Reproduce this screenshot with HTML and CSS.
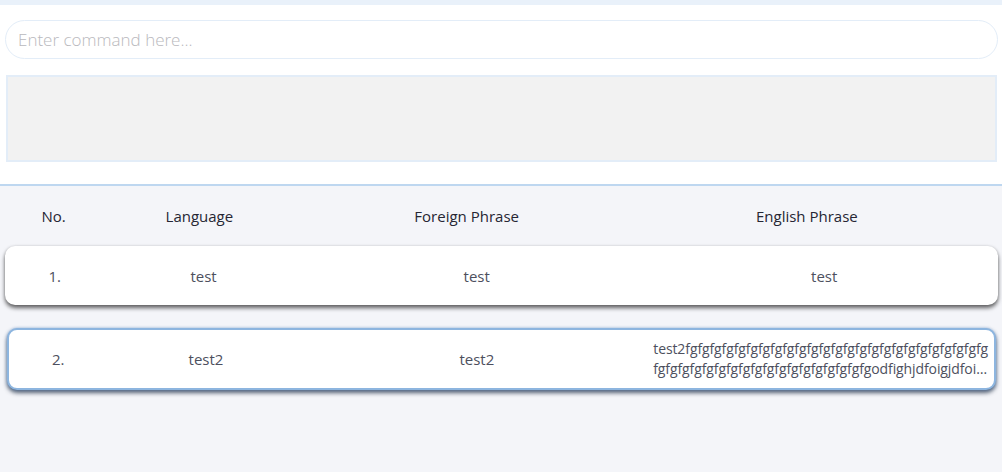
FILE: index.html
```html
<!DOCTYPE html>
<html>
<head>
<meta charset="utf-8">
<link rel="stylesheet" href="styles.css">
</head>
<body>
<div class="topbar"></div>
<section class="command">
  <input class="cmd-input" type="text" placeholder="Enter command here...">
  <div class="output"></div>
</section>
<section class="list">
  <div class="header">
    <div class="cell">No.</div>
    <div class="cell">Language</div>
    <div class="cell">Foreign Phrase</div>
    <div class="cell">English Phrase</div>
  </div>
  <div class="row">
    <div class="cell">1.</div>
    <div class="cell">test</div>
    <div class="cell">test</div>
    <div class="cell">test</div>
  </div>
  <div class="row selected">
    <div class="cell">2.</div>
    <div class="cell">test2</div>
    <div class="cell">test2</div>
    <div class="cell"><span class="clamp">test2fgfgfgfgfgfgfgfgfgfgfgfgfgfgfgfgfgfgfgfgfgfgfgfgfgfgfgfgfgfgfgfgfgfgfgfgfgfgfgfgfgfgfgodfighjdfoigjdfoigjdfgoijdfgoijdfgoijdfg</span></div>
  </div>
</section>
</body>
</html>
```
FILE: styles.css
```css
* { box-sizing: border-box; }
html, body { margin: 0; height: 100%; }
body {
  font-family: "Open Sans", "Liberation Sans", sans-serif;
  background: #f4f5f9;
  display: flex;
  flex-direction: column;
}
.topbar { height: 5px; background: #e9f1fa; }
.command {
  background: #fff;
  padding: 15px 5px 22px 5px;
  border-bottom: 2px solid #bed7f0;
}
.cmd-input {
  display: block;
  width: 993px;
  height: 39px;
  border: 1px solid #e3edf8;
  border-radius: 20px;
  padding: 0 12px;
  font-family: "Open Sans", sans-serif;
  font-size: 17px;
  font-weight: 300;
  color: #333;
  outline: none;
  background: #fff;
}
.cmd-input::placeholder { color: #b9b9bd; }
.output {
  margin: 16px 0 0 1px;
  width: 991px;
  height: 87px;
  background: #f2f2f2;
  border: 2px solid #e3edf8;
}
.list { flex: 1; padding: 0 4px 0 5px; }
.header {
  display: grid;
  grid-template-columns: 10% 20% 35% 35%;
  width: 972px;
  height: 59px;
  align-items: center;
  font-size: 15px;
  color: #262633;
}
.header .cell { text-align: center; }
.row {
  display: grid;
  grid-template-columns: 10% 20% 35% 35%;
  align-items: center;
  background: #fff;
  border-radius: 10px;
  min-height: 59px;
  margin-top: 1px;
  font-size: 15px;
  color: #4d505e;
  box-shadow: 0 0 3px rgba(0,0,0,0.12), 0 3px 4px rgba(0,0,0,0.6);
}
.row .cell {
  display: flex;
  justify-content: center;
  padding: 0 4px;
  line-height: 20px;
}
.row.selected {
  margin: 23px 2px 0 2px;
  padding: 9px 0;
  min-height: 62px;
  border: 2px solid #8db5df;
  box-shadow: 0 0 3px rgba(70,130,200,0.5), 0 3px 4px rgba(20,35,60,0.7);
}
.clamp {
  display: -webkit-box;
  -webkit-line-clamp: 2;
  -webkit-box-orient: vertical;
  overflow: hidden;
  text-overflow: ellipsis;
  word-break: break-all;
  font-size: 14px;
  letter-spacing: -0.1px;
}
```
